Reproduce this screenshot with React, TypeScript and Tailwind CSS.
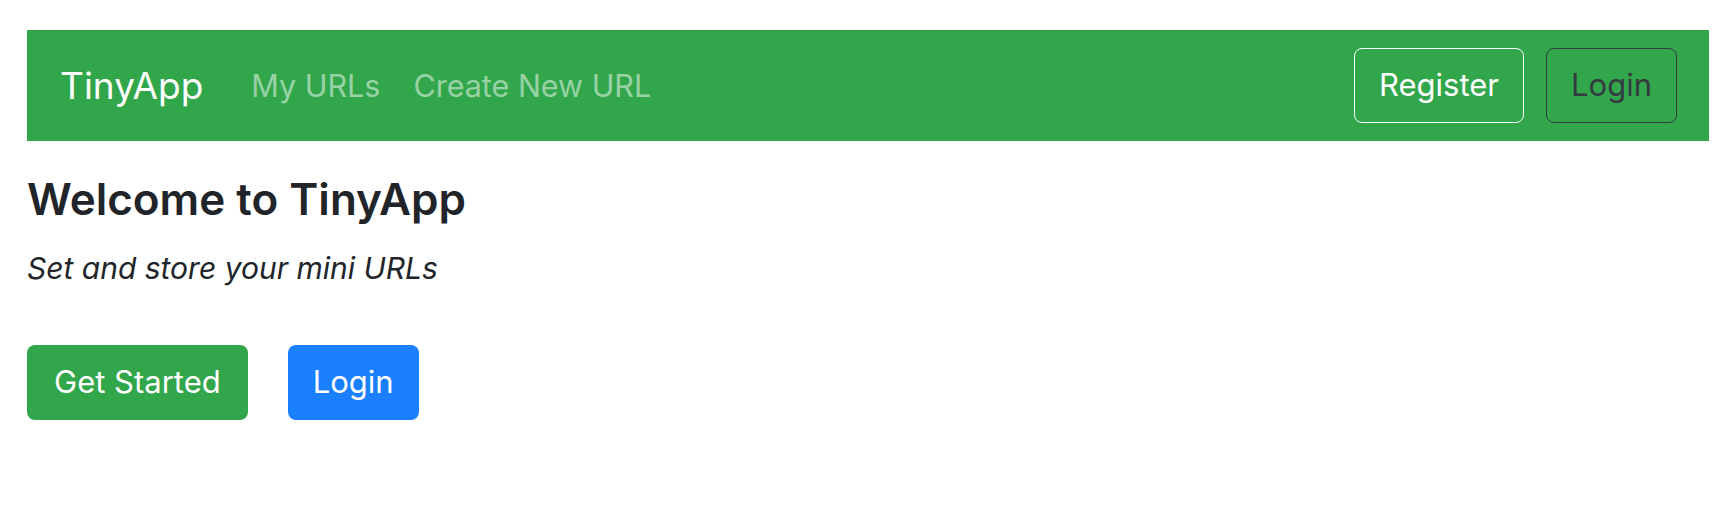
import React from "react";

const App = () => {
  return (
    <div className="min-h-[518px] bg-white pt-[30px] pl-[27px] pr-[25px] font-['Inter',sans-serif] text-[#212529]">
      <nav className="flex items-center h-[111px] bg-[#31a64b] pl-[33px] pr-[32px]">
        <a href="#" className="text-[37px] text-white mr-[48px] leading-none">
          TinyApp
        </a>
        <div className="flex items-center gap-[33px] text-[30.5px] text-white/50">
          <a href="#">My URLs</a>
          <a href="#">Create New URL</a>
        </div>
        <div className="ml-auto flex items-center gap-[22px]">
          <button className="h-[75px] px-[24px] border-[1.5px] border-white rounded-[8px] text-white text-[31px]">
            Register
          </button>
          <button className="h-[75px] px-[24px] border-[1.5px] border-[#343a40] rounded-[8px] text-[#343a40] text-[31px]">
            Login
          </button>
        </div>
      </nav>

      <h2 className="mt-[32px] text-[44px] font-semibold leading-[1.2]">
        Welcome to TinyApp
      </h2>
      <p className="mt-[20px] text-[30px] italic leading-[1.5]">
        Set and store your mini URLs
      </p>

      <div className="mt-[54px] flex gap-[40px]">
        <button className="h-[75px] px-[27px] rounded-[8px] bg-[#31a64b] text-white text-[31px]">
          Get Started
        </button>
        <button className="h-[75px] px-[25px] rounded-[8px] bg-[#1a80fe] text-white text-[31px]">
          Login
        </button>
      </div>
    </div>
  );
};

export default App;
